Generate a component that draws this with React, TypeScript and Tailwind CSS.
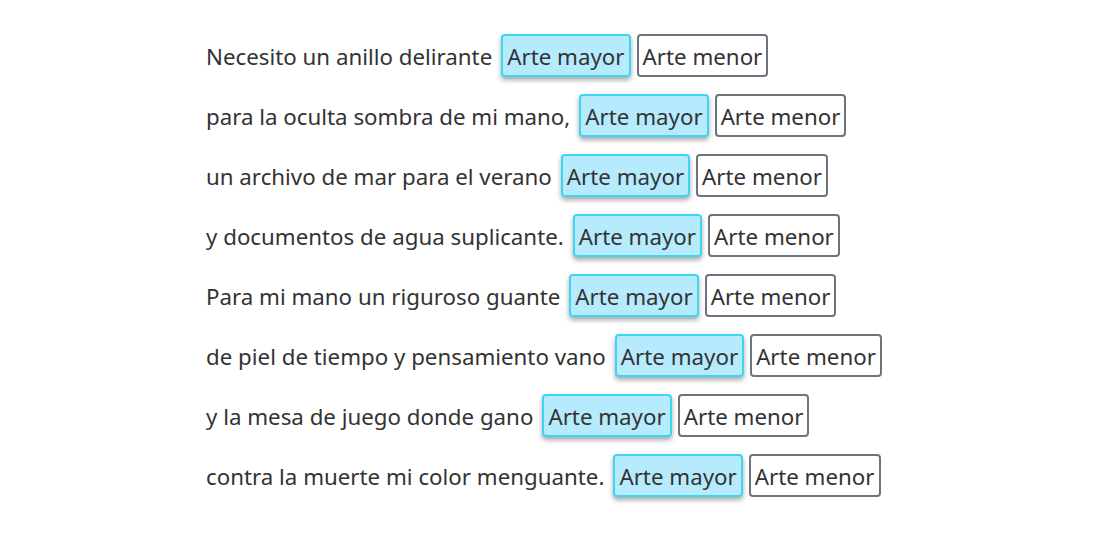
const lines = [
  'Necesito un anillo delirante',
  'para la oculta sombra de mi mano,',
  'un archivo de mar para el verano',
  'y documentos de agua suplicante.',
  'Para mi mano un riguroso guante',
  'de piel de tiempo y pensamiento vano',
  'y la mesa de juego donde gano',
  'contra la muerte mi color menguante.',
];

export default function App() {
  return (
    <div className="min-h-screen bg-white pl-[206px] pt-[34px] text-[#333] font-['Noto_Sans','Open_Sans',sans-serif] text-[22.3px]">
      {lines.map((line) => (
        <div key={line} className="flex items-center h-[43px] mb-[17px]">
          <span className="mr-[9px] pt-[3px]">{line}</span>
          <button className="h-[43px] px-[4px] pt-[3px] bg-[#b5ebfd] border-2 border-[#3dd5f3] rounded-[4px] shadow-[0_3px_5px_rgba(0,0,0,0.35)] leading-none">
            Arte mayor
          </button>
          <button className="ml-[6px] h-[43px] px-[4px] pt-[3px] bg-white border-2 border-[#6c757d] rounded-[4px] leading-none">
            Arte menor
          </button>
        </div>
      ))}
    </div>
  );
}
